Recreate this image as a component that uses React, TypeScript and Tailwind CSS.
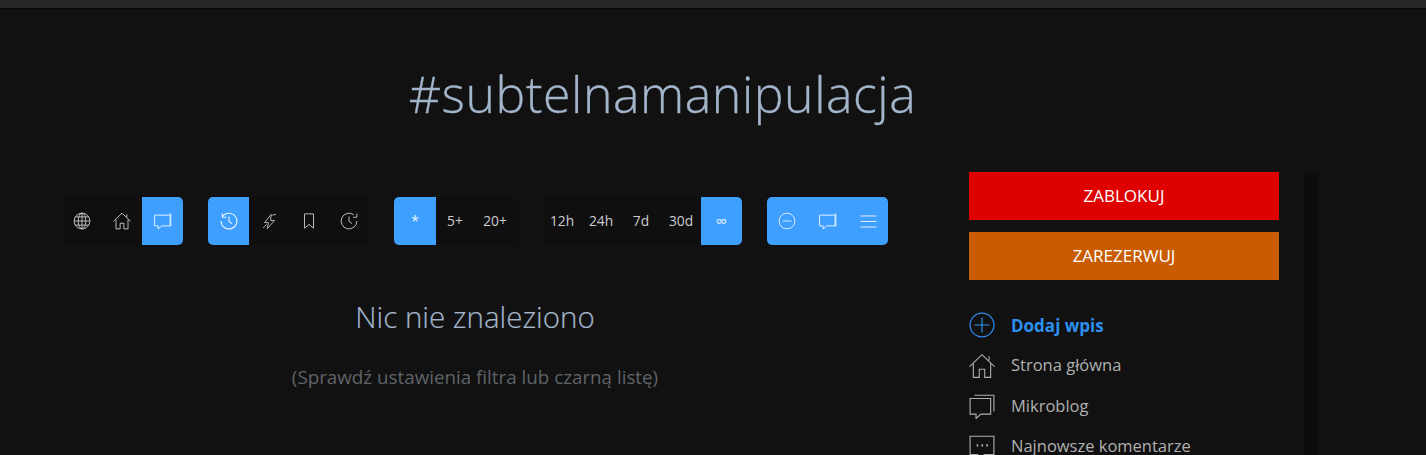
import React from "react";

const font = "font-['Open_Sans','Noto_Sans',sans-serif]";

function Ico({ s = 18, w = 1.2, children }: { s?: number; w?: number; children: React.ReactNode }) {
  return (
    <svg width={s} height={s} viewBox="0 0 24 24" fill="none" stroke="currentColor" strokeWidth={w}>
      {children}
    </svg>
  );
}

const GlobeI = () => (
  <Ico>
    <circle cx="12" cy="12" r="10.5" />
    <ellipse cx="12" cy="12" rx="5" ry="10.5" />
    <path d="M12 1.5v21M1.5 12h21M3 6.5h18M3 17.5h18" />
  </Ico>
);
const HomeI = ({ s = 18, w = 1.2 }: { s?: number; w?: number }) => (
  <Ico s={s} w={w}>
    <path d="M0.5 12.5 12 1.5l11.5 11M18.5 7V3M4 10v12.5h5.5V15h5v7.5H20V10" />
  </Ico>
);
const ChatI = ({ s = 26, w = 1 }: { s?: number; w?: number }) => (
  <Ico s={s} w={w}>
    <path d="M5 2h18v15M1 5h19v14.5H11l-4.5 4v-4H1z" />
  </Ico>
);
const BubbleI = () => (
  <Ico s={19} w={1.2}>
    <path d="M21 2.5h1.5v15H21M2 4h19.5v13.5H11l-4.5 4v-4H2z" />
  </Ico>
);
const CommentI = ({ s = 26, w = 1 }: { s?: number; w?: number }) => (
  <Ico s={s} w={w}>
    <path d="M1 2h22v17H14l-3 3.5L8 19H1z" />
    <path d="M7 10.5h1.5M11.5 10.5H13M16 10.5h1.5" strokeWidth="2" />
  </Ico>
);
const HistoryI = () => (
  <Ico s={18} w={1.5}>
    <path d="M3.5 6A10.5 10.5 0 1 1 1.5 12" />
    <path d="M3 1.5V7h5.5M12 6v6.5l4 3" />
  </Ico>
);
const BoltI = () => (
  <Ico s={17}>
    <path d="M14.5 2 5 13.5h5.5L9 22l10-11.5h-5.5z" />
    <path d="M3 21 8 16M16 3l5-1" />
  </Ico>
);
const BookmarkI = () => (
  <Ico s={18}>
    <path d="M6 2.5h12v19l-6-5-6 5z" />
  </Ico>
);
const ClockI = () => (
  <Ico s={18}>
    <path d="M22.5 12A10.5 10.5 0 1 1 18.5 3.8" />
    <path d="M22.5 2v5h-5M12 6v6.5l4 3" />
  </Ico>
);
const MinusI = () => (
  <Ico s={18}>
    <circle cx="12" cy="12" r="10.5" />
    <path d="M6 12h12" />
  </Ico>
);
const MenuI = () => (
  <Ico s={19}>
    <path d="M2 5h20M2 12h20M2 19h20" />
  </Ico>
);
const PlusI = () => (
  <Ico s={26} w={1.1}>
    <circle cx="12" cy="12" r="11" />
    <path d="M12 5v14M5 12h14" />
  </Ico>
);

type Item = { c: React.ReactNode; on?: boolean; w?: string };

function Group({ items }: { items: Item[] }) {
  return (
    <div className="flex h-12">
      {items.map((it, i) => (
        <div
          key={i}
          className={`flex h-12 items-center justify-center text-[13.8px] first:rounded-l-[5px] last:rounded-r-[5px] ${it.w ?? "w-[40px]"} ${
            it.on ? "bg-[#3f9fff] text-[#e6f3ff]" : "bg-[#0f0f0f] text-[#cccccc]"
          }`}
        >
          {it.c}
        </div>
      ))}
    </div>
  );
}

function NavRow({ icon, label, cls = "" }: { icon: React.ReactNode; label: string; cls?: string }) {
  return (
    <div className={`flex h-[40.5px] items-center ${cls}`}>
      <div className="flex w-[42px] items-center">{icon}</div>
      <span>{label}</span>
    </div>
  );
}

export default function App() {
  return (
    <div className={`relative h-[455px] w-[1426px] overflow-hidden bg-[#111111] ${font}`}>
      <div className="h-[9px] border-b border-[#0a0a0a] bg-[#262626]" />
      <h1 className="mt-[52px] w-[1325px] text-center text-[50px] font-light leading-[66px] tracking-[0.55px] text-[#a3b5cb] [-webkit-text-stroke:0.3px_#a3b5cb]">
        #subtelnamanipulacja
      </h1>
      <div className="mt-[45px] flex items-start">
        <div className="ml-[62px] mt-[25px] w-[826px]">
          <div className="flex gap-[25px]">
            <Group
              items={[
                { c: <GlobeI /> },
                { c: <HomeI /> },
                { c: <BubbleI />, on: true, w: "w-[41px]" },
              ]}
            />
            <Group
              items={[
                { c: <HistoryI />, on: true, w: "w-[41px]" },
                { c: <BoltI /> },
                { c: <BookmarkI /> },
                { c: <ClockI /> },
              ]}
            />
            <Group
              items={[
                { c: "*", on: true, w: "w-[42px]" },
                { c: "5+", w: "w-[38px]" },
                { c: "20+", w: "w-[44px] pr-[2px]" },
              ]}
            />
            <Group
              items={[
                { c: "12h", w: "w-[38px]" },
                { c: "24h" },
                { c: "7d" },
                { c: "30d" },
                { c: <span className="text-[16px]">∞</span>, on: true, w: "w-[41px]" },
              ]}
            />
            <Group
              items={[
                { c: <MinusI />, on: true },
                { c: <BubbleI />, on: true, w: "w-[41px]" },
                { c: <MenuI />, on: true },
              ]}
            />
          </div>
          <h2 className="mt-[53px] text-center text-[29.5px] font-light leading-[38px] text-[#a3b5cb] [-webkit-text-stroke:0.2px_#a3b5cb]">
            Nic nie znaleziono
          </h2>
          <p className="mt-[29px] text-center text-[18.8px] leading-6 text-[#5f6368]">(Sprawdź ustawienia filtra lub czarną listę)</p>
        </div>
        <div className="ml-[81px] w-[310px]">
          <button className="block h-12 w-full bg-[#df0000] text-[17px] text-white">ZABLOKUJ</button>
          <button className="mt-3 block h-12 w-full bg-[#c95b00] text-[17px] text-white">ZAREZERWUJ</button>
          <div className="mt-[25px] text-[16.5px] text-[#b0b0b0]">
            <NavRow icon={<PlusI />} label="Dodaj wpis" cls="text-[17px] font-bold text-[#2d8fef]" />
            <NavRow icon={<HomeI s={26} w={1} />} label="Strona główna" />
            <NavRow icon={<ChatI />} label="Mikroblog" />
            <NavRow icon={<CommentI />} label="Najnowsze komentarze" />
          </div>
        </div>
        <div className="ml-[25px] h-[300px] w-[15px] bg-[#0c0c0c]" />
      </div>
    </div>
  );
}
